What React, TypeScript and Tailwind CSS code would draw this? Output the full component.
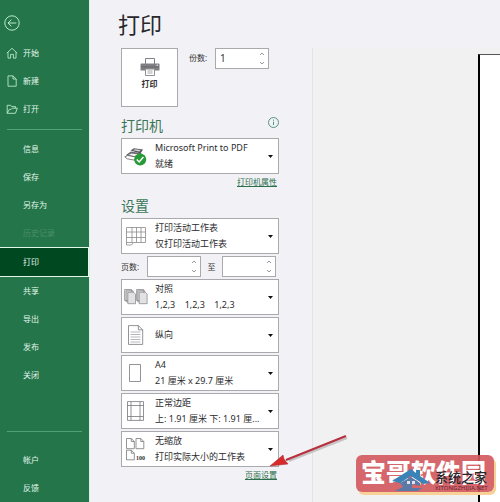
import React, { useState } from "react";
import clsx from "clsx";

const topItems = [
  { label: "开始", icon: "home" },
  { label: "新建", icon: "file" },
  { label: "打开", icon: "folder" },
];

const menuItems = ["信息", "保存", "另存为", "历史记录", "打印", "共享", "导出", "发布", "关闭"];

const NavIcon = ({ name }: { name: string }) => (
  <svg viewBox="0 0 12 12" className="w-3 h-3" fill="none" stroke="#b9eacb" strokeWidth="0.9">
    {name === "home" && <path d="M0.8 6.2 6 1.3l5.2 4.9M2 5.2v5.9h2.6V7.4h2.8v3.7H10V5.2" />}
    {name === "file" && <path d="M2 .9h5L10.2 4v7.2H2zM7 .9V4h3.2" />}
    {name === "folder" && (
      <path d="M1.2 10.3V2.3h3.4l1 1.3h3.9v1.6M1.2 10.3l2.2-4h2l1-1.1h5L9.4 10.3z" />
    )}
  </svg>
);

const PrinterIcon = () => (
  <svg viewBox="0 0 20 18" className="w-5 h-[18px]">
    <path d="M1.5 5.5h17a1 1 0 0 1 1 1v6h-19v-6a1 1 0 0 1 1-1z" fill="#808084" />
    <path d="M1 9h18" stroke="#66666a" />
    <path d="M5.5.5h9v5.5h-9z" fill="#fff" stroke="#808084" />
    <path d="M5.5 11h9v6.5h-9z" fill="#fff" stroke="#909094" />
    <path d="M7.5 13h5M7.5 15h5" stroke="#8d8d92" strokeWidth="0.8" />
    <path d="M16.5 7.2h1.5" stroke="#fff" />
  </svg>
);

const ReadyPrinterIcon = () => (
  <svg viewBox="0 0 24 20" className="w-6 h-5">
    <path d="M6.5 4.5 10 2.2l9 1.2-2.5 4z" fill="#55555b" />
    <path d="m9 4.3 2-1.1 5.6.8-1.3 1.6z" fill="#d5d5da" />
    <path d="m2.5 8.5 4.5-3 10.5 1.8-3 5.7L2.5 11z" fill="#69696f" />
    <path d="m4.5 9 3-1.6 7 1.2-2 1.8z" fill="#f3f3f3" />
    <path d="m.8 10.8 3-1.3 8 1.5-1 3.2-7.6-1.4z" fill="#fff" stroke="#66666c" strokeWidth="0.8" />
    <circle cx="16.2" cy="13.4" r="6" fill="#259a35" />
    <path d="m12.8 13.5 2.4 2.5 4.2-5" fill="none" stroke="#fff" strokeWidth="1.5" />
  </svg>
);

const SheetIcon = () => (
  <svg viewBox="0 0 24 20" className="w-6 h-5" fill="none" stroke="#8a8a8e" strokeWidth="0.8">
    <path d="M2.5 1.5h19v15H9.5l-2 2.5h-5z" fill="#fff" />
    <path d="M2.5 6h19M2.5 11.5h19M8 1.5v15M12.5 1.5v15M17 1.5v15M2.5 16.5h7" />
  </svg>
);

const CollateIcon = () => (
  <svg viewBox="0 0 24 20" className="w-6 h-5" fill="#e2e2e4" stroke="#8d8d91" strokeWidth="0.8">
    <path d="M.6 2.5h7v11h-7zM2.1 3.8h7v11h-7z" />
    <path d="M3.8 5.2h5.7l2 2v9.5H3.8z" />
    <path d="M12.6 2.5h7v11h-7zM13.8 3.8h7v11h-7z" />
    <path d="M15.2 5.2h5.9l2 2v9.5h-7.9z" />
  </svg>
);

const PortraitIcon = () => (
  <svg viewBox="0 0 24 20" className="w-6 h-5" fill="none" stroke="#77777b" strokeWidth="0.8">
    <path d="M4.5.6h9.8l4.4 4.2v14.6H4.5z" fill="#fff" />
    <path d="M14.3.6v4.2h4.4" />
    <path d="M6.5 7h10M6.5 9.5h10M6.5 12h10M6.5 14.5h10M6.5 17h10" stroke="#a5a5a8" />
  </svg>
);

const PaperIcon = () => (
  <svg viewBox="0 0 24 20" className="w-6 h-5">
    <path d="M5.5 1.5h11v17h-11z" fill="#fff" stroke="#88888c" strokeWidth="0.9" />
  </svg>
);

const MarginsIcon = () => (
  <svg viewBox="0 0 24 20" className="w-6 h-5" fill="none" stroke="#77777b" strokeWidth="0.8">
    <path d="M3.5.6h16v18.8h-16zM7 .6v18.8M16 .6v18.8M3.5 4.5h16M3.5 15.5h16" />
  </svg>
);

const ScalingIcon = () => (
  <svg viewBox="0 0 24 24" className="w-6 h-6" fill="none" stroke="#77777b" strokeWidth="0.8">
    <path d="M2.5 1.5h4.8l3 3v7.2H2.5zM7.3 1.5v3h3" />
    <path d="M12 1.5h4.8l3 3v7.2H12zM16.8 1.5v3h3" />
    <path d="M2.5 13.2h4.8l3 3v6.6H2.5zM7.3 13.2v3h3" />
    <text x="12" y="23" fontSize="6" fontWeight="700" fontFamily="Liberation Serif, serif" fill="#333" stroke="none">
      100
    </text>
  </svg>
);

interface PickerProps {
  icon: React.ReactNode;
  title: string;
  detail?: string;
}

const Picker: React.FC<PickerProps> = ({ icon, title, detail }) => (
  <button className="flex items-center w-full h-9 pl-[2px] pr-[5px] bg-white border border-[#aaaaae] text-left text-[9px] leading-4 text-[#2b2b2e]">
    <span className="w-6 mr-[7px] shrink-0">{icon}</span>
    <span className="flex-1 min-w-0">
      <span className="block">{title}</span>
      {detail && <span className="block whitespace-pre">{detail}</span>}
    </span>
    <svg viewBox="0 0 5 3" className="w-[5px] h-[3px] shrink-0">
      <path d="M0 0h5L2.5 3z" fill="#111" />
    </svg>
  </button>
);

interface SpinnerProps {
  id: string;
  label: string;
  initial?: string;
}

const Spinner: React.FC<SpinnerProps> = ({ id, label, initial = "" }) => {
  const [value, setValue] = useState(initial);

  const step = (amount: number) => {
    setValue(String(Math.max(1, (Number(value) || 0) + amount)));
  };

  return (
    <div className="flex w-[54px] h-[21px] bg-white border border-[#aaaaae]">
      <input
        id={id}
        type="text"
        value={value}
        onChange={(e) => setValue(e.target.value)}
        className="flex-1 min-w-0 pl-1 text-[10px] text-[#333] focus:outline-none"
      />
      <div className="flex flex-col justify-between py-[3px] w-[9px] pr-[3px]">
        <button aria-label={`${label} 增加`} onClick={() => step(1)}>
          <svg viewBox="0 0 6 4" className="w-[6px] h-1" fill="none" stroke="#98989c">
            <path d="m1 3 2-2 2 2" />
          </svg>
        </button>
        <button aria-label={`${label} 减少`} onClick={() => step(-1)}>
          <svg viewBox="0 0 6 4" className="w-[6px] h-1" fill="none" stroke="#98989c">
            <path d="m1 1 2 2 2-2" />
          </svg>
        </button>
      </div>
    </div>
  );
};

const Sidebar = () => {
  const [active, setActive] = useState("打印");

  return (
    <nav className="flex flex-col w-[90px] shrink-0 bg-[#24754a] border-r border-[#dcefe3] text-[8px] text-[#e3f7ea]">
      <button aria-label="返回" className="mt-[15px] ml-1 w-4 h-4">
        <svg viewBox="0 0 16 16" fill="none" stroke="#b9eacb" strokeWidth="1">
          <circle cx="8" cy="8" r="7.2" />
          <path d="M12.3 8H4M7.4 4.6 4 8l3.4 3.4" />
        </svg>
      </button>

      <div className="mt-2">
        {topItems.map((item) => (
          <button key={item.label} className="flex items-center w-full h-7 pl-[6px] gap-[5px]">
            <NavIcon name={item.icon} />
            {item.label}
          </button>
        ))}
      </div>

      <div className="mx-[7px] mt-[6px] mb-[5px] border-t border-[#4fa274]" />

      {menuItems.map((label) => (
        <button
          key={label}
          disabled={label === "历史记录"}
          onClick={() => setActive(label)}
          className={clsx(
            "w-full pl-[23px] text-left shrink-0",
            label === active
              ? "h-[30px] bg-[#00481f] border-y border-r border-[#e3f7ea]"
              : "h-7",
            label === "历史记录" && "text-[#4b9069]"
          )}
        >
          {label}
        </button>
      ))}

      <div className="mx-[7px] mt-auto mb-[14px] border-t border-[#4fa274]" />
      <button className="w-full h-7 pl-[23px] text-left shrink-0">帐户</button>
      <button className="w-full h-7 pl-[23px] text-left shrink-0">反馈</button>
    </nav>
  );
};

const PrintSettings = () => (
  <div className="w-[158px] shrink-0">
    <div className="flex items-start">
      <button className="flex flex-col items-center w-[57px] h-[59px] pt-[9px] bg-white border border-[#aaaaae] text-[8px] leading-4 font-bold text-[#333]">
        <PrinterIcon />
        打印
      </button>
      <label htmlFor="copies" className="ml-[11px] mr-2 w-[18px] whitespace-nowrap text-[8px] leading-5 text-[#333]">
        份数:
      </label>
      <Spinner id="copies" label="份数" initial="1" />
    </div>

    <div className="flex justify-between mt-2">
      <h2 className="text-sm leading-[22px] text-[#3b7658]">打印机</h2>
      <button aria-label="打印机信息" className="mt-[2px] w-[11px] h-[11px]">
        <svg viewBox="0 0 11 11" fill="none" stroke="#3f8c75" strokeWidth="0.9">
          <circle cx="5.5" cy="5.5" r="5" />
          <path d="M5.5 4.7v3.4M5.5 2.6v1.1" />
        </svg>
      </button>
    </div>
    <div className="mt-[1px]">
      <Picker icon={<ReadyPrinterIcon />} title="Microsoft Print to PDF" detail="就绪" />
    </div>
    <div className="flex justify-end pr-[2px] text-[8px] leading-4 text-[#2b6e4b]">
      <a href="#printer" className="underline">
        打印机属性
      </a>
    </div>

    <h2 className="mt-[5px] text-sm leading-[22px] text-[#3b7658]">设置</h2>
    <div className="mt-[1px]">
      <Picker icon={<SheetIcon />} title="打印活动工作表" detail="仅打印活动工作表" />
    </div>
    <div className="flex items-center my-[2px] text-[8px] text-[#333]">
      <label htmlFor="from" className="w-[26px] whitespace-nowrap">
        页数:
      </label>
      <Spinner id="from" label="起始页" />
      <label htmlFor="to" className="w-[21px] text-center">
        至
      </label>
      <Spinner id="to" label="结束页" />
    </div>
    <div className="flex flex-col gap-[2px]">
      <Picker icon={<CollateIcon />} title="对照" detail="1,2,3    1,2,3    1,2,3" />
      <Picker icon={<PortraitIcon />} title="纵向" />
      <Picker icon={<PaperIcon />} title="A4" detail="21 厘米 x 29.7 厘米" />
      <Picker icon={<MarginsIcon />} title="正常边距" detail="上: 1.91 厘米 下: 1.91 厘..." />
      <Picker icon={<ScalingIcon />} title="无缩放" detail="打印实际大小的工作表" />
    </div>
    <div className="flex justify-end pr-[2px] text-[8px] leading-4 text-[#2b6e4b]">
      <a href="#page-setup" className="underline">
        页面设置
      </a>
    </div>
  </div>
);

const Watermark = () => (
  <div className="absolute right-[6px] bottom-[10px] w-[138px] h-[37px] pl-[5px] rounded-md bg-[#d1565d]/90 shadow-[2px_3px_0_#f7d196] text-[25px] leading-[35px] font-black text-white whitespace-nowrap">
    宝哥软件园
    <svg viewBox="0 0 40 24" className="absolute left-9 bottom-0 w-10 h-6">
      <path d="M0 13 19 1l5 4V2h4v6l10 7-7 1-12-8L8 15z" fill="#3a83b8" />
      <path d="M8 15 19 9l9 6v3l-8-2v4h10l-4 3H3l8-4z" fill="#5a7aa5" />
      <path d="M15 13h3v3h-3zM20 13h3v3h-3z" fill="#dbe4ee" />
    </svg>
    <div className="absolute left-[79px] bottom-0 text-[#27262b]">
      <div className="text-[13px] leading-[14px] font-medium">系统之家</div>
      <div className="text-[6px] leading-[8px] font-normal text-[#6b2733]">XITONGZHIJIA.NET</div>
    </div>
  </div>
);

const App = () => (
  <div className="relative flex min-h-screen bg-[#f2f2f6] font-['Noto_Sans','Noto_Sans_CJK_SC',sans-serif]">
    <Sidebar />
    <main className="flex flex-col flex-1 min-w-0 pl-[31px]">
      <h1 className="h-12 pt-2 -ml-[3px] text-[22px] leading-8 text-[#28282c]">打印</h1>
      <div className="flex flex-1">
        <PrintSettings />
        <section aria-label="预览" className="flex flex-1 ml-[33px] pt-[6px] pl-[165px] border-l border-[#e4e4e7] bg-[#f1f1f2]">
          <div className="flex-1 bg-white border-l-2 border-t border-l-black border-t-[#555]" />
        </section>
      </div>
    </main>

    <svg viewBox="0 0 80 36" className="absolute left-[269px] top-[433px] w-20 h-9">
      <path d="M77 3 19 26" stroke="#999" strokeWidth="2" opacity="0.5" transform="translate(1 2)" />
      <path d="M77 3 17 27" stroke="#b5303c" strokeWidth="2.4" />
      <path d="m1 33 13-11 1 4 4 5z" fill="#d82a2a" stroke="#9e2530" strokeWidth="0.5" />
    </svg>
    <Watermark />
  </div>
);

export default App;
